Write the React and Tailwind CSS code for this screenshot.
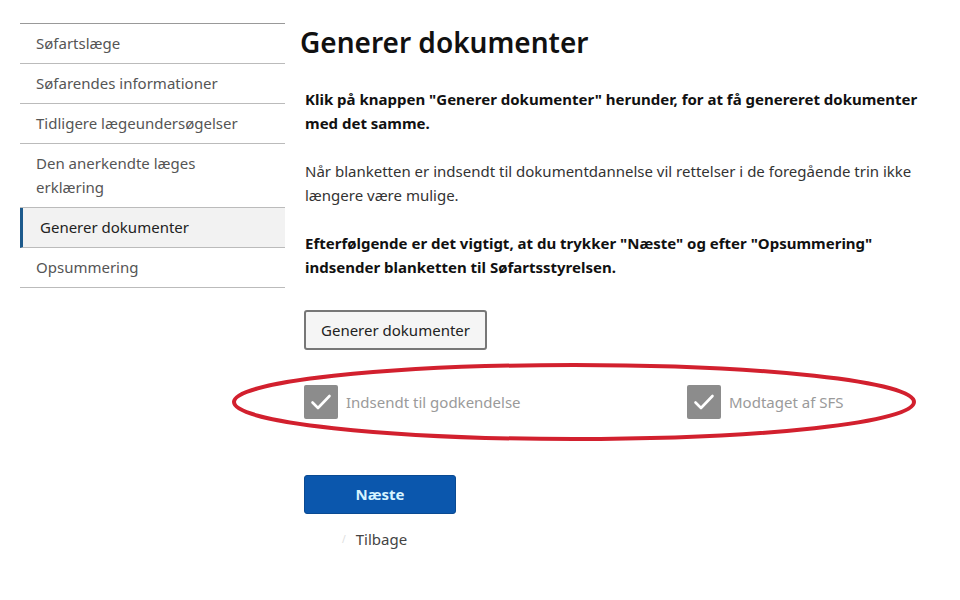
import React from 'react';

const steps = [
  { label: 'Søfartslæge' },
  { label: 'Søfarendes informationer' },
  { label: 'Tidligere lægeundersøgelser' },
  { label: 'Den anerkendte læges erklæring' },
  { label: 'Generer dokumenter', active: true },
  { label: 'Opsummering' },
];

function Check({ label }) {
  return (
    <div className="flex items-center gap-2">
      <div className="w-[34px] h-[34px] bg-[#8c8c8c] rounded-[2px] flex items-center justify-center">
        <svg width="24" height="24" viewBox="0 0 24 24" fill="none" stroke="#fff" strokeWidth="2.6" strokeLinecap="round" strokeLinejoin="round">
          <path d="M3.5 12.5l5.5 5.5L20.5 6" />
        </svg>
      </div>
      <span className="text-[15px] text-[#9a9a9a]">{label}</span>
    </div>
  );
}

export default function App() {
  return (
    <div className="w-[960px] h-[600px] bg-white flex pt-[23px] pl-5 font-['Noto_Sans',sans-serif] text-[#222]">
      {/* Sidebar steps */}
      <nav className="w-[265px] shrink-0 self-start border-t border-[#999]">
        {steps.map((s, i) => (
          <div
            key={i}
            className={`border-b border-[#bbb] text-[15px] leading-6 pt-[7px] pb-[8px] ${
              s.active
                ? 'bg-[#f2f2f2] border-l-[3px] border-l-[#1d5a8c] pl-[17px] text-[#222]'
                : 'pl-4 pr-[30px] text-[#555]'
            }`}
          >
            {s.label}
          </div>
        ))}
      </nav>

      {/* Main content */}
      <main className="ml-[15px] relative flex-1">
        <h1 className="text-[28px] font-semibold leading-9 mt-[1px] text-[#111]">Generer dokumenter</h1>

        <div className="pl-[5px] w-[625px] text-[15px] leading-6 mt-[27px]">
          <p className="font-bold text-[#111]">
            Klik på knappen "Generer dokumenter" herunder, for at få genereret dokumenter med det samme.
          </p>
          <p className="mt-6 text-[#333]">
            Når blanketten er indsendt til dokumentdannelse vil rettelser i de foregående trin ikke længere være mulige.
          </p>
          <p className="mt-6 font-bold text-[#111]">
            Efterfølgende er det vigtigt, at du trykker "Næste" og efter "Opsummering" indsender blanketten til Søfartsstyrelsen.
          </p>
        </div>

        <button className="ml-[4px] mt-[31px] h-[40px] px-[15px] border-2 border-[#777] rounded-[3px] bg-[#f5f5f5] text-[15px] text-[#222]">
          Generer dokumenter
        </button>

        <div className="ml-[4px] mt-[35px] flex w-[612px] justify-between">
          <Check label="Indsendt til godkendelse" />
          <div className="w-[229px]">
            <Check label="Modtaget af SFS" />
          </div>
        </div>

        {/* red annotation ellipse */}
        <svg className="absolute left-[-70px] top-[338px] pointer-events-none" width="690" height="84" viewBox="0 0 690 84">
          <ellipse cx="344" cy="41" rx="340" ry="37" fill="none" stroke="#d2202e" strokeWidth="4" />
        </svg>

        <button className="ml-[4px] mt-[56px] block w-[152px] h-[39px] rounded-[3px] bg-[#0b57ad] border border-[#0a4a92] text-[15px] font-bold text-[#d6f3ff]">
          Næste
        </button>

        <div className="ml-[42px] mt-[14px] flex items-center gap-[10px] text-[15px] text-[#444]">
          <span className="text-[#ddd] text-[10px]">/</span>
          <span>Tilbage</span>
        </div>
      </main>
    </div>
  );
}
